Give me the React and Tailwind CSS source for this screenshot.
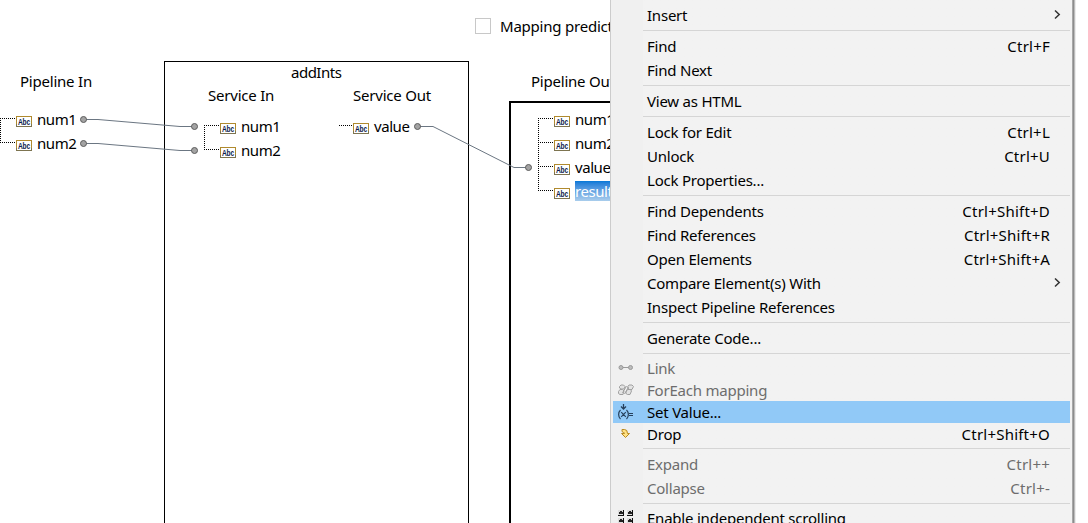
import React from 'react';

function AbcIcon() {
  return (
    <svg width="16" height="11" viewBox="0 0 16 11" className="block shrink-0 overflow-visible">
      <rect x="0.5" y="0.5" width="15" height="10" fill="#fff" stroke="#7d7450" />
      <path d="M0 .5H16M.5 0V8M15.5 0V8" stroke="#b08a2e" />
      <text x="2" y="9" textLength="12" lengthAdjust="spacingAndGlyphs" fontSize="9" fontWeight="700" fontFamily="Liberation Sans, sans-serif" fill="#0a1a4c">
        Abc
      </text>
    </svg>
  );
}

function Field({ name, place, selected }) {
  return (
    <div className={`absolute flex h-5 items-center gap-[5px] ${place}`}>
      <div className="pt-[5px]"><AbcIcon /></div>
      <span className={`h-5 pr-[2px] leading-[20px] tracking-[-0.45px] ${selected ? 'bg-linear-to-b from-[#0078d7] to-[#a9cdec] text-white' : ''}`}>{name}</span>
    </div>
  );
}

function Label({ place, children }) {
  return <div className={`absolute leading-[20px] ${place}`}>{children}</div>;
}

function Port({ x, y }) {
  return <circle cx={x} cy={y} r="3" fill="#a3a3a3" stroke="#5c5c5c" />;
}

function Wires() {
  return (
    <svg className="absolute left-0 top-0" width="611" height="523">
      <g stroke="#000" strokeDasharray="1 1" shapeRendering="crispEdges" fill="none">
        <path d="M.5 118V143M0 118.5H16M0 142.5H16" />
        <path d="M204.5 125V150M204 125.5H220M204 149.5H220M339 125.5H353" />
        <path d="M538.5 118V191M538 118.5H554M538 142.5H554M538 166.5H554M538 190.5H554" />
      </g>
      <g stroke="#6b7682" fill="none">
        <path d="M83 119.5H98L180 126.5H194" />
        <path d="M83 143.5H98L180 150.5H194" />
        <path d="M417 126.5H433L514 167.5H528" />
      </g>
      <Port x={83.5} y={119.5} />
      <Port x={83.5} y={143.5} />
      <Port x={194.5} y={126.5} />
      <Port x={194.5} y={150.5} />
      <Port x={417.5} y={126.5} />
      <Port x={528.5} y={167.5} />
    </svg>
  );
}

function LinkIcon() {
  return (
    <svg width="16" height="16" viewBox="0 0 16 16" fill="#bcbcbc" stroke="#999">
      <path d="M4 7.500H12" />
      <circle cx="3" cy="7.500" r="2" />
      <circle cx="12.500" cy="7.500" r="2" />
    </svg>
  );
}

function ForEachIcon() {
  return (
    <svg width="16" height="16" viewBox="0 0 16 16" fill="#e3e3e3" stroke="#a0a0a0">
      <path d="M1.500 4.500 3 3H5.500L7 4.500 6 7H3L1.500 6Z" />
      <path d="M.5 9.500 2 7.500H4.500L6 9 5 12.500H2L.5 11.500Z" />
      <path d="M9.500 5 11 3H14L15.500 4.500 14 7.500H11Z" />
      <path d="M8 10 9.500 7.500H12.500L13.500 9 12 12.500H9.500L8 11.500Z" />
      <path d="M4.500 11 8.500 4M6.500 12 10.500 5" />
    </svg>
  );
}

function SetValueIcon() {
  return (
    <svg width="16" height="16" viewBox="0 0 16 16" fill="none" stroke="#26405c">
      <path d="M5.500 0V5M3 2.500 5.500 5 8 2.500" strokeWidth="1.3" />
      <path d="M2.500 6C0 8.500 0 12.500 2.500 15M8.500 6C11 8.500 11 12.500 8.500 15M3.200 8.200 7.800 12.800M7.800 8.200 3.200 12.800" strokeWidth="1.2" />
      <path d="M11 9.500H15M11 11.500H15" />
    </svg>
  );
}

function DropIcon() {
  return (
    <svg width="16" height="16" viewBox="0 0 16 16" fill="#ffe183" stroke="#b88a20">
      <path d="M4 3.500H6.500Q9.500 3.500 9.500 7.500H11.500L7.500 11.500 3.500 7.500H6.500Q6.500 6.500 5.500 6.500L4 5.500Z" />
    </svg>
  );
}

function ScrollIcon() {
  return (
    <svg width="16" height="16" viewBox="0 0 16 16" shapeRendering="crispEdges">
      {[[0, 0], [9, 0], [0, 8], [9, 8]].map(([x, y]) => (
        <g key={`${x}-${y}`} transform={`translate(${x} ${y})`}>
          <path d="M0 0H6V6H0Z" fill="#ddd" />
          <path d="M5 0H6V6H0V5H5Z" fill="#111" />
          <path d="M2 1H4V2H5V4H1V2H2Z" fill="#222" />
        </g>
      ))}
    </svg>
  );
}

const groups = [
  [{ label: 'Insert', submenu: true }],
  [{ label: 'Find', keys: 'Ctrl+F' }, { label: 'Find Next' }],
  [{ label: 'View as HTML' }],
  [{ label: 'Lock for Edit', keys: 'Ctrl+L' }, { label: 'Unlock', keys: 'Ctrl+U' }, { label: 'Lock Properties...' }],
  [
    { label: 'Find Dependents', keys: 'Ctrl+Shift+D' },
    { label: 'Find References', keys: 'Ctrl+Shift+R' },
    { label: 'Open Elements', keys: 'Ctrl+Shift+A' },
    { label: 'Compare Element(s) With', submenu: true },
    { label: 'Inspect Pipeline References' },
  ],
  [{ label: 'Generate Code...' }],
  [
    { label: 'Link', icon: LinkIcon, disabled: true },
    { label: 'ForEach mapping', icon: ForEachIcon, disabled: true },
    { label: 'Set Value...', icon: SetValueIcon, active: true },
    { label: 'Drop', icon: DropIcon, keys: 'Ctrl+Shift+O' },
  ],
  [{ label: 'Expand', keys: 'Ctrl++', disabled: true }, { label: 'Collapse', keys: 'Ctrl+-', disabled: true }],
  [{ label: 'Enable independent scrolling', icon: ScrollIcon }],
];

function MenuItem({ item }) {
  const Icon = item.icon;
  return (
    <div className={`flex items-center ${Icon ? 'h-[22px]' : 'h-6'} ${item.active ? 'bg-[#91c9f7]' : ''} ${item.disabled ? 'text-[#6d6d6d]' : 'text-black'}`}>
      <div className="flex w-[34px] shrink-0 pl-[5px]">{Icon && <Icon />}</div>
      <span className="grow whitespace-nowrap">{item.label}</span>
      {item.keys && <span className="mr-5 whitespace-nowrap tracking-[0.22px]">{item.keys}</span>}
      {item.submenu && (
        <svg width="7" height="10" viewBox="0 0 7 10" className="mr-[9px]" fill="none" stroke="#333" strokeWidth="1.5">
          <path d="M1 .5 5.200 4.500 1 8.500" />
        </svg>
      )}
    </div>
  );
}

export default function App() {
  return (
    <div className="relative h-[523px] w-[1088px] overflow-hidden bg-white font-['Noto_Sans','Open_Sans',sans-serif] text-[15px] tracking-[-0.22px] whitespace-nowrap text-black">
      <div className="absolute left-[475px] top-[18px] size-4 border border-[#c8c8c8]" />
      <Label place="left-[500px] top-[16px]">Mapping predict</Label>
      <Label place="left-[20px] top-[71px]">Pipeline In</Label>
      <div className="absolute left-[164px] top-[61px] h-[470px] w-[305px] border border-black" />
      <Label place="left-[291px] top-[62px] tracking-[-0.5px]">addInts</Label>
      <Label place="left-[208px] top-[85px]">Service In</Label>
      <Label place="left-[353px] top-[85px]">Service Out</Label>
      <Label place="left-[531px] top-[71px]">Pipeline Out</Label>
      <div className="absolute left-[509px] top-[101px] h-[430px] w-[200px] border-2 border-black" />
      <Wires />
      <Field name="num1" place="left-[16px] top-[109px]" />
      <Field name="num2" place="left-[16px] top-[133px]" />
      <Field name="num1" place="left-[220px] top-[116px]" />
      <Field name="num2" place="left-[220px] top-[140px]" />
      <Field name="value" place="left-[353px] top-[116px]" />
      <Field name="num1" place="left-[554px] top-[109px]" />
      <Field name="num2" place="left-[554px] top-[133px]" />
      <Field name="value" place="left-[554px] top-[157px]" />
      <Field name="result" place="left-[554px] top-[181px]" selected />

      <div className="absolute left-[610px] top-0 flex h-[523px] w-[466px]">
        <div className="w-px bg-[#ccc]" />
        <div className="w-[461px] bg-linear-to-r from-[#f0f0f0] from-7% to-[#f2f2f2] to-7% py-[3px] pl-[2px] pr-[2px]">
          {groups.map((group, i) => (
            <div key={i}>
              {i > 0 && <div className="flex h-[7px] items-center pl-[30px]"><div className="h-px grow bg-[#d5d5d5]" /></div>}
              {group.map((item) => <MenuItem key={item.label} item={item} />)}
            </div>
          ))}
        </div>
        <div className="w-px bg-[#a8a8a8]" />
        <div className="w-px bg-[#8c8c8c]" />
        <div className="w-px bg-[#bcbcbc]" />
        <div className="w-px bg-[#ececec]" />
      </div>
    </div>
  );
}
